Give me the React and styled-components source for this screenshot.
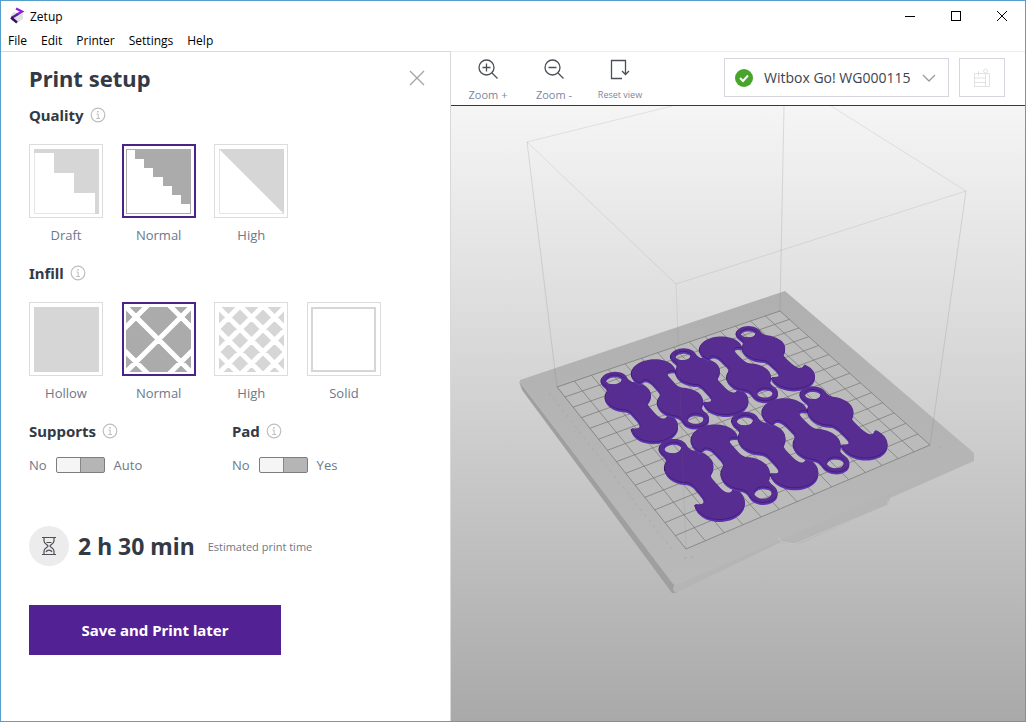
import React, { useState } from 'react';
import styled, { createGlobalStyle } from 'styled-components';

const GlobalStyle = createGlobalStyle`
  * {
    box-sizing: border-box;
  }
  body {
    margin: 0;
    font-family: 'Open Sans', 'Noto Sans', sans-serif;
    color: #333a45;
  }
  button, select, input {
    font-family: inherit;
    margin: 0;
  }
`;

const Window = styled.div`
  display: flex;
  flex-direction: column;
  min-height: 100vh;
  border: 1px solid #579fcb;
  background: #fff;
`;

const TitleBar = styled.header`
  display: flex;
  align-items: center;
  height: 30px;
  padding-left: 8px;
  font-size: 12px;
  color: #000;
`;

const AppName = styled.span`
  flex: 1;
  margin-left: 5px;
`;

const WindowButton = styled.button`
  display: flex;
  align-items: center;
  justify-content: center;
  width: 46px;
  height: 28px;
  padding: 0;
  border: none;
  background: none;
`;

const MenuBar = styled.nav`
  display: flex;
  gap: 14px;
  height: 20px;
  padding-left: 7px;
`;

const MenuItem = styled.button`
  padding: 0;
  border: none;
  background: none;
  font-size: 12px;
  line-height: 20px;
  color: #000;
`;

const Main = styled.div`
  display: flex;
  flex: 1;
`;

const Panel = styled.aside`
  display: flex;
  flex-direction: column;
  align-items: flex-start;
  flex: 0 0 450px;
  padding: 10px 25px 24px 28px;
  border-top: 1px solid #d8d8d8;
  border-right: 1px solid #d8d8d8;
`;

const PanelHeader = styled.div`
  display: flex;
  align-items: center;
  justify-content: space-between;
  align-self: stretch;
  height: 32px;
`;

const PanelTitle = styled.h1`
  margin: 0;
  font-family: 'Noto Sans', sans-serif;
  font-size: 22px;
  line-height: 32px;
`;

const CloseButton = styled.button`
  display: flex;
  padding: 0;
  border: none;
  background: none;
`;

const Group = styled.fieldset`
  min-width: 0;
  margin: ${(props) => props.$top}px 0 0;
  padding: 0;
  border: none;
`;

const GroupTitle = styled.legend`
  display: flex;
  align-items: center;
  gap: 6px;
  height: 24px;
  padding: 0;
  font-family: 'Noto Sans', sans-serif;
  font-size: 15px;
  line-height: 24px;
  font-weight: bold;
`;

const Choices = styled.div`
  display: grid;
  grid-template-columns: repeat(4, 74px);
  justify-content: space-between;
  width: 352px;
  margin-top: 17px;
`;

const Choice = styled.label`
  display: flex;
  flex-direction: column;
  align-items: center;
  gap: 8px;
  position: relative;
  font-size: 13px;
  line-height: 18px;
  color: #6c7889;
`;

const HiddenRadio = styled.input`
  position: absolute;
  opacity: 0;
`;

const Tile = styled.span`
  display: flex;
  align-items: center;
  justify-content: center;
  width: 74px;
  height: 74px;
  border: ${(props) => (props.$active ? '2px solid #4a2389' : '1px solid #dcdcdc')};
  color: ${(props) => (props.$active ? '#ababab' : '#d6d6d6')};
`;

const SwitchColumns = styled.div`
  display: grid;
  grid-template-columns: 203px auto;
`;

const SwitchRow = styled.label`
  display: flex;
  align-items: center;
  gap: 9px;
  margin-top: 13px;
  font-size: 13px;
  line-height: 18px;
  color: #6c7889;
`;

const Switch = styled.input`
  appearance: none;
  width: 49px;
  height: 16px;
  border: 1px solid #7d7d7d;
  border-radius: 2px;
  background: linear-gradient(to right, #f5f5f5 48%, #868686 48%, #868686 51%, #b5b5b5 51%);

  &:checked {
    background: linear-gradient(to right, #4e2191 48%, #868686 48%, #868686 51%, #f5f5f5 51%);
  }
`;

const Estimate = styled.div`
  display: flex;
  align-items: center;
  margin-top: 52px;
`;

const EstimateIcon = styled.span`
  display: flex;
  align-items: center;
  justify-content: center;
  width: 40px;
  height: 40px;
  border-radius: 50%;
  background: #ececec;
`;

const Duration = styled.strong`
  margin: 0 13px 0 9px;
  font-family: 'Noto Sans', sans-serif;
  font-size: 23px;
  line-height: 32px;
`;

const Caption = styled.span`
  font-size: 11px;
  color: #6c7889;
`;

const PrintButton = styled.button`
  width: 252px;
  height: 50px;
  margin-top: 39px;
  border: none;
  background: #522194;
  color: #fff;
  font-family: 'Noto Sans', sans-serif;
  font-size: 15px;
  font-weight: bold;
`;

const Workspace = styled.main`
  display: flex;
  flex-direction: column;
  flex: 1;
  min-width: 0;
`;

const Toolbar = styled.div`
  display: flex;
  align-items: flex-start;
  height: 55px;
  padding: 6px 20px 0 4px;
  border-top: 1px solid #ececec;
  border-bottom: 1px solid #4a2380;
`;

const ToolButton = styled.button`
  display: flex;
  flex-direction: column;
  align-items: center;
  gap: 7px;
  width: 66px;
  padding: 0;
  border: none;
  background: none;
  font-size: ${(props) => (props.$small ? 9 : 11)}px;
  line-height: 16px;
  color: #7b869c;
`;

const PrinterField = styled.div`
  position: relative;
  display: flex;
  margin-left: auto;
`;

const PrinterSelect = styled.select`
  appearance: none;
  width: 225px;
  height: 39px;
  padding: 0 36px 0 39px;
  border: 1px solid #d5d5e0;
  border-radius: 0;
  background: #fff;
  font-size: 14px;
  color: #3b4350;
`;

const FieldIcon = styled.span`
  position: absolute;
  top: 0;
  bottom: 0;
  ${(props) => (props.$end ? 'right: 13px' : 'left: 11px')};
  display: flex;
  align-items: center;
  pointer-events: none;
`;

const BoxButton = styled.button`
  display: flex;
  align-items: center;
  justify-content: center;
  width: 46px;
  height: 39px;
  margin-left: 10px;
  padding: 0;
  border: 1px solid #d5d5e0;
  background: #fff;
`;

const Viewport = styled.div`
  display: flex;
  flex: 1;
  min-height: 0;
  background: linear-gradient(#f5f5f5, #dedede 32%, #a9a9a9);
`;

const Scene = styled.svg`
  display: block;
  width: 100%;
  flex: 1;
`;

// The bed is a 14 x 14 cell plane seen in perspective.
const CELLS = 14;

function project(u, v) {
  const s = u / CELLS;
  const t = v / CELLS;
  const w = 0.09624 * s - 0.14523 * t + 1;
  return [(298.07 * s + 29.37 * t + 557) / w, (-46.07 * s + 82.27 * t + 387) / w];
}

function toPath(points) {
  return `M${points.map(([u, v]) => project(u, v).map((n) => n.toFixed(1)).join(' ')).join('L')}Z`;
}

function arc(cx, cy, r, from, to, steps = 36) {
  return Array.from({ length: steps + 1 }, (_, i) => {
    const a = from + ((to - from) * i) / steps;
    return [cx + r * Math.cos(a), cy + r * Math.sin(a)];
  });
}

function curve(a, c, b, steps = 8) {
  return Array.from({ length: steps + 1 }, (_, i) => {
    const t = i / steps;
    const k = (1 - t) * (1 - t);
    return [0, 1].map((n) => k * a[n] + 2 * t * (1 - t) * c[n] + t * t * b[n]);
  });
}

const TAU = Math.PI * 2;
const DISC = arc(0, 0, 1.18, 0, TAU);
const RING = arc(0, -1.62, 0.68, 0, TAU);
const HOLE = arc(0, -1.62, 0.45, 0, TAU);
const COLLAR = [
  ...curve([-0.8, -0.8], [-0.6, -1.05], [-0.66, -1.5]),
  ...curve([-0.42, -1.44], [0, -0.95], [0.42, -1.44]),
  ...curve([0.66, -1.5], [0.6, -1.05], [0.8, -0.8]),
];
const HEAD = [
  ...arc(0, 2.98, 1.17, -0.42, Math.PI + 0.42),
  ...curve([-1.07, 2.5], [-0.5, 3], [-0.5, 2]),
  ...curve([-0.5, 1.5], [-0.5, 1.12], [-0.7, 0.9]),
  ...curve([0.7, 0.9], [0.5, 1.12], [0.5, 1.5]),
  ...curve([0.5, 2], [0.5, 3], [1.07, 2.5]),
];

const KEYRINGS = [0, 6.55].flatMap((row) =>
  [0, 1, 2, 3, 4].map((i) => ({
    u: 2.88 + i * 2.1,
    v: row + (i % 2 ? 4.44 : 2.58),
    flip: i % 2 ? -1 : 1,
  }))
);

// Drawn from the bottom up: shaded left wall, lit front wall, top face.
const LAYERS = [
  [-1, 1, '#35195f'],
  [0, 3, '#6036b4'],
  [0, 2, '#5a31a6'],
  [0, 1, '#42207a'],
  [0, 0, '#572d91'],
];

function Keyring({ u, v, flip }) {
  const path = (points) => toPath(points.map(([x, y]) => [u + x * flip, v + y * flip]));
  return LAYERS.map(([dx, dy, fill]) => (
    <g key={fill} transform={`translate(${dx} ${dy})`} fill={fill}>
      <path d={path(DISC)} />
      <path d={path(HEAD)} />
      <path d={path(COLLAR)} />
      <path d={path(RING) + path(HOLE)} fillRule="evenodd" />
    </g>
  ));
}

function gridPath() {
  let d = '';
  for (let i = 0; i <= CELLS; i += 1) {
    d += `M${project(i, 0)}L${project(i, CELLS)}M${project(0, i)}L${project(CELLS, i)}`;
  }
  return d;
}

function PrintBed() {
  return (
    <Scene viewBox="451 106 574 615" preserveAspectRatio="xMidYMid meet" role="img" aria-label="Print bed preview">
      <defs>
        <linearGradient id="plate" x1="0" y1="0" x2="0" y2="1">
          <stop offset="0" stopColor="#b0b0b0" />
          <stop offset="1" stopColor="#b9b9b9" />
        </linearGradient>
      </defs>
      <path d="M519 381L522 390L672 593L676 593L674 584Z" fill="#9f9f9f" />
      <path d="M674 584L974 453V461L890 498L888 505L806 541Q798 545 792 544L779 543L676 593L673 590Z" fill="#b5b5b5" />
      <path d="M785 291L974 453Q974 455 971 456L887 494L676 585L673 584L520 382V380Z" fill="url(#plate)" />
      <path d="M778 537L781 542L795 544L888 505L888 500" fill="none" stroke="#c4c4c4" />
      <path d="M558 387L780 311L930 445L686 549Z" fill="#bbb" />
      <path d="M549 393L674 552M684 558L694 557M939 448L943 445" fill="none" stroke="#a6a6a6" strokeDasharray="3 4" strokeWidth="0.8" />
      <path d={gridPath()} fill="none" stroke="#757572" strokeWidth="0.7" />
      {KEYRINGS.map((item) => (
        <Keyring key={`${item.u}-${item.v}`} {...item} />
      ))}
      <g fill="none" stroke="#777" strokeWidth="0.8">
        <path d="M672 106L527 142L676 284L966 191L831 106" strokeOpacity="0.2" />
        <path d="M527 142L557 387M784 106L780 311M966 191L930 445" strokeOpacity="0.26" />
        <path d="M676 284L686 549" strokeOpacity="0.16" />
      </g>
    </Scene>
  );
}

function Logo() {
  return (
    <svg width="16" height="18" viewBox="0 0 16 18">
      <path d="M5 5L14 7V12L8 16L2 13V8Z" fill="#e2e2e2" />
      <path d="M7 1.500L13 4.500L8 7.500" fill="none" stroke="#8c1fe0" strokeWidth="2.400" />
      <path d="M9 7L2.500 11" fill="none" stroke="#5d1fa0" strokeWidth="2.400" />
      <path d="M2 10.500L8 15.500" fill="none" stroke="#301653" strokeWidth="2.400" />
    </svg>
  );
}

function InfoIcon() {
  return (
    <svg width="16" height="16" viewBox="0 0 16 16" fill="none" stroke="#bebebe">
      <circle cx="8" cy="8" r="6.800" strokeWidth="1.200" />
      <path d="M6.500 7H8.200V11.500M6.300 11.500H10" />
      <path d="M8 4V5.500" strokeWidth="1.600" />
    </svg>
  );
}

function LayerArt({ d, outline = 1 }) {
  return (
    <svg width="65" height="65" viewBox="0 0 65 65">
      <rect x="0.500" y="0.500" width="64" height="64" fill="none" stroke="currentColor" strokeOpacity={outline} />
      <path d={d} fill="currentColor" />
    </svg>
  );
}

function Lattice({ pitch, offset, thickness }) {
  const lines = [];
  for (let k = -5; k <= 8; k += 1) {
    const n = offset + k * pitch;
    lines.push(`M${n - 70} -70L${n + 140} 140M${135 - n} -70L${-75 - n} 140`);
  }
  return (
    <svg width="65" height="65" viewBox="0 0 65 65">
      <rect width="65" height="65" fill="currentColor" />
      <path d={lines.join('')} stroke="#fff" strokeWidth={thickness} />
    </svg>
  );
}

function SolidArt() {
  return (
    <svg width="65" height="65" viewBox="0 0 65 65">
      <rect x="1" y="1" width="63" height="63" fill="none" stroke="currentColor" strokeWidth="2" />
    </svg>
  );
}

const QUALITY = [
  { name: 'Draft', art: <LayerArt d="M0 0H65V65H61V44H40V24H20V4H0Z" outline={0.6} /> },
  { name: 'Normal', art: <LayerArt d="M9 0H65V55H55V46H46V37H37V28H27V19H18V10H9Z" /> },
  { name: 'High', art: <LayerArt d="M0 0L65 65V0Z" outline={0.6} /> },
];

const INFILL = [
  { name: 'Hollow', art: <LayerArt d="M0 0H65V65H0Z" /> },
  { name: 'Normal', art: <Lattice pitch={45} offset={0} thickness={5} /> },
  { name: 'High', art: <Lattice pitch={23} offset={-1} thickness={5} /> },
  { name: 'Solid', art: <SolidArt /> },
];

function ChoiceGroup({ title, top, options }) {
  const [value, setValue] = useState('Normal');
  return (
    <Group $top={top}>
      <GroupTitle>
        {title} <InfoIcon />
      </GroupTitle>
      <Choices>
        {options.map(({ name, art }) => (
          <Choice key={name}>
            <HiddenRadio type="radio" name={title} checked={value === name} onChange={() => setValue(name)} />
            <Tile $active={value === name}>{art}</Tile>
            {name}
          </Choice>
        ))}
      </Choices>
    </Group>
  );
}

function SwitchGroup({ title, on }) {
  return (
    <Group $top={17}>
      <GroupTitle>
        {title} <InfoIcon />
      </GroupTitle>
      <SwitchRow>
        No
        <Switch type="checkbox" role="switch" />
        {on}
      </SwitchRow>
    </Group>
  );
}

function Magnifier({ plus }) {
  return (
    <svg width="22" height="22" viewBox="0 0 22 22" fill="none" stroke="#4c4f55" strokeWidth="1.300">
      <circle cx="9.500" cy="9.500" r="7.500" />
      <path d="M15 15L20.500 20.500M5.500 9.500H13.500" />
      {plus && <path d="M9.500 5.500V13.500" />}
    </svg>
  );
}

function App() {
  return (
    <Window>
      <GlobalStyle />
      <TitleBar>
        <Logo />
        <AppName>Zetup</AppName>
        <WindowButton aria-label="Minimize">
          <svg width="10" height="10" stroke="#000"><path d="M0 5.500H10" /></svg>
        </WindowButton>
        <WindowButton aria-label="Maximize">
          <svg width="10" height="10" fill="none" stroke="#000"><rect x="0.500" y="0.500" width="9" height="9" /></svg>
        </WindowButton>
        <WindowButton aria-label="Close">
          <svg width="10" height="10" stroke="#000"><path d="M0 0L10 10M10 0L0 10" /></svg>
        </WindowButton>
      </TitleBar>
      <MenuBar>
        {['File', 'Edit', 'Printer', 'Settings', 'Help'].map((item) => (
          <MenuItem key={item}>{item}</MenuItem>
        ))}
      </MenuBar>
      <Main>
        <Panel>
          <PanelHeader>
            <PanelTitle>Print setup</PanelTitle>
            <CloseButton aria-label="Close panel">
              <svg width="16" height="16" stroke="#a3a3a3" strokeWidth="1.300">
                <path d="M1 1L15 15M15 1L1 15" />
              </svg>
            </CloseButton>
          </PanelHeader>
          <ChoiceGroup title="Quality" top={9} options={QUALITY} />
          <ChoiceGroup title="Infill" top={17} options={INFILL} />
          <SwitchColumns>
            <SwitchGroup title="Supports" on="Auto" />
            <SwitchGroup title="Pad" on="Yes" />
          </SwitchColumns>
          <Estimate>
            <EstimateIcon>
              <svg width="16" height="20" viewBox="0 0 16 20" fill="none" stroke="#4c4f55" strokeWidth="1.200">
                <path d="M1 1.500H15M1 18.500H15" />
                <path d="M3 1.500V5C3 8 7 8.500 7 10S3 12 3 15V18.500M13 1.500V5C13 8 9 8.500 9 10S13 12 13 15V18.500" />
                <path d="M5.500 6.500H10.500M5 16C6 13.500 10 13.500 11 16" />
              </svg>
            </EstimateIcon>
            <Duration>2 h 30 min</Duration>
            <Caption>Estimated print time</Caption>
          </Estimate>
          <PrintButton>Save and Print later</PrintButton>
        </Panel>
        <Workspace>
          <Toolbar>
            <ToolButton>
              <Magnifier plus />
              Zoom +
            </ToolButton>
            <ToolButton>
              <Magnifier />
              Zoom -
            </ToolButton>
            <ToolButton $small>
              <svg width="22" height="22" viewBox="0 0 22 22" fill="none" stroke="#4c4f55" strokeWidth="1.300">
                <path d="M13 20.500H2.500V2.500H16.500V16.500M13 13L16.500 16.500L20 13" />
              </svg>
              Reset view
            </ToolButton>
            <PrinterField>
              <PrinterSelect aria-label="Printer">
                <option>Witbox Go! WG000115</option>
              </PrinterSelect>
              <FieldIcon>
                <svg width="18" height="18" viewBox="0 0 18 18">
                  <circle cx="9" cy="9" r="9" fill="#48a52c" />
                  <path d="M5 9L8 12L13 6.500" fill="none" stroke="#fff" strokeWidth="2" />
                </svg>
              </FieldIcon>
              <FieldIcon $end>
                <svg width="14" height="8" viewBox="0 0 14 8" fill="none" stroke="#969ba3" strokeWidth="1.300">
                  <path d="M1 1L7 7L13 1" />
                </svg>
              </FieldIcon>
            </PrinterField>
            <BoxButton aria-label="Print">
              <svg width="18" height="20" viewBox="0 0 18 20" fill="none" stroke="#e2e2e2">
                <path d="M1.500 5.500H16.500V18.500H1.500ZM1.500 10H12M1.500 14.500H12M12.500 5.500V18.500" />
                <circle cx="12.500" cy="3" r="2" />
                <path d="M5.500 3V8" />
              </svg>
            </BoxButton>
          </Toolbar>
          <Viewport>
            <PrintBed />
          </Viewport>
        </Workspace>
      </Main>
    </Window>
  );
}

export default App;
